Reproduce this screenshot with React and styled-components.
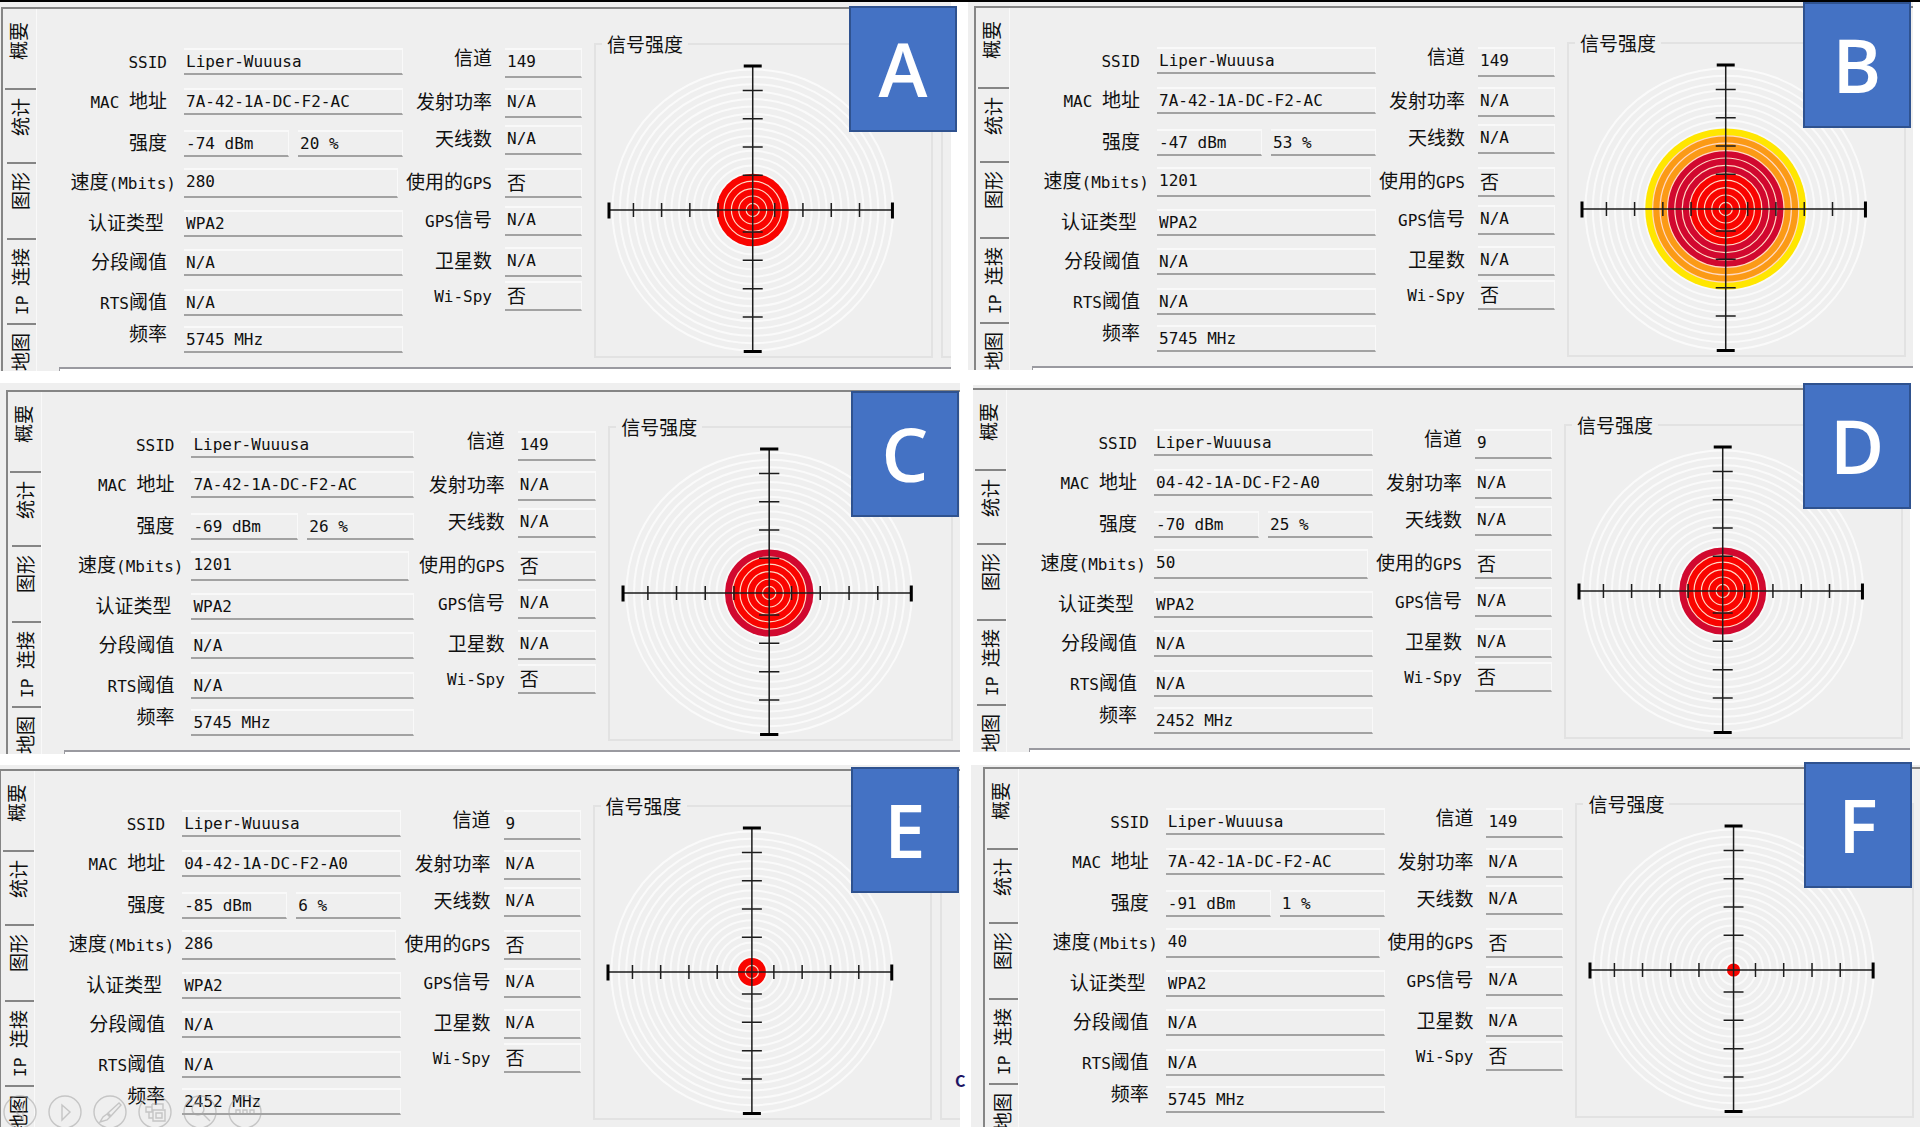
import React from 'react';
import styled, { createGlobalStyle } from 'styled-components';

const colors = {
  face: '#efefef',
  ink: '#101010',
  edge: '#858585',
  line: '#a2a2a2',
  soft: '#e2e2e2',
  light: '#f9f9f9',
  badge: '#4472c4',
  badgeEdge: '#2f528f',
};

const cjk = "'Noto Sans CJK SC', sans-serif";
const mono = "'DejaVu Sans Mono', 'Noto Sans CJK SC', monospace";

const GlobalStyle = createGlobalStyle`
  * {
    box-sizing: border-box;
  }
  body {
    margin: 0;
    background: #fff;
    color: ${colors.ink};
    font-family: ${cjk};
    font-size: 19px;
  }
`;

const Page = styled.main`
  position: relative;
  display: grid;
  grid-template-columns: 1fr 1fr;
  height: 100vh;
  border-top: 2px solid #000;
  overflow: hidden;
`;

const Column = styled.div`
  min-width: 0;
`;

const Panel = styled.section`
  position: relative;
  margin: ${(p) => p.$margin};
  padding: ${(p) => p.$pad};
  background: ${colors.face};
`;

const Frame = styled.div`
  display: grid;
  grid-template-columns:
    34px minmax(0, 366fr) minmax(0, 179fr) minmax(0, 12fr) minmax(0, 339fr)
    ${(p) => p.$tail}px;
  grid-template-rows: 358px 4px;
  border-top: 2px solid ${colors.edge};
  border-left: ${(p) => p.$edge}px solid ${colors.edge};
`;

const Tabs = styled.div`
  grid-row: 1 / 3;
  display: grid;
  grid-template-rows: 81px 74px 76px 85px 90px;
  border-right: 1px solid ${colors.light};
  overflow: hidden;
`;

const Tab = styled.button`
  display: flex;
  justify-content: flex-start;
  align-items: flex-start;
  margin: 0 2px 0 ${(p) => (p.$active ? 2 : 4)}px;
  padding: ${(p) => (p.$active ? 13 : 8)}px 0 0;
  border: 0;
  border-bottom: 2px solid ${colors.edge};
  background: none;
  color: inherit;
  font: inherit;
  span {
    writing-mode: vertical-rl;
    text-orientation: sideways;
    transform: rotate(180deg);
    line-height: 26px;
    white-space: nowrap;
  }
`;

const Ascii = styled.span`
  font-family: ${mono};
  font-size: 16px;
`;

const Form = styled.div`
  display: grid;
  align-items: end;
`;

const MainForm = styled(Form)`
  grid-template-columns: minmax(0, 147fr) minmax(0, 219fr);
  grid-template-rows: 40px 40px 42px 41px 39px 39px 40px 37px;
  align-content: start;
  padding-top: 26px;
`;

const SideForm = styled(Form)`
  grid-template-columns: minmax(0, 102fr) minmax(0, 77fr);
  grid-template-rows: 38px 40px 37px 43px 38px 41px 34px;
  align-content: start;
  padding-top: 31px;
`;

const Label = styled.label`
  align-self: ${(p) => (p.$middle ? 'center' : 'end')};
  justify-self: end;
  padding-right: ${(p) => p.$gap}px;
  line-height: ${(p) => p.$height - 4}px;
  height: ${(p) => p.$height}px;
  white-space: nowrap;
`;

const Field = styled.input`
  display: block;
  width: 100%;
  min-width: 0;
  height: ${(p) => p.$height}px;
  padding: 0 2px ${(p) => (p.$height > 27 ? 3 : 0)}px;
  border: 0;
  border-top: 2px solid ${colors.light};
  border-right: 1px solid ${colors.light};
  border-bottom: 2px solid ${colors.line};
  border-radius: 0;
  background: transparent;
  color: inherit;
  font-family: ${mono};
  font-size: ${(p) => (p.$wide ? 19 : 16)}px;
  outline: none;
`;

const Cell = styled.div`
  display: flex;
  gap: 9px;
  padding-right: ${(p) => (p.$short ? 5 : 0)}px;
`;

const Group = styled.fieldset`
  min-width: 0;
  height: 324px;
  margin: 25px 0 0;
  padding: 0;
  border: 2px solid ${colors.soft};
  legend {
    margin-left: 6px;
    padding: 0 5px;
    line-height: 20px;
  }
`;

const Dial = styled.svg`
  display: block;
  width: 87%;
  height: 292px;
  margin: 10px 0 0 11px;
`;

const Stub = styled.div`
  min-width: 0;
  height: 314px;
  margin: 35px 0 0 8px;
  border: 2px solid ${colors.soft};
  border-right: 0;
`;

const Mark = styled.div`
  padding: 264px 0 0 13px;
  color: #1c1464;
  font-size: 16px;
  font-weight: 700;
  line-height: 16px;
`;

const List = styled.div`
  grid-column: 2 / -1;
  grid-row: 2;
  margin-left: 22px;
  border-top: 2px solid #9a9aa0;
  border-left: 1px solid #9a9aa0;
  background: #fff;
`;

const Badge = styled.div`
  position: absolute;
  top: ${(p) => p.$top}px;
  right: ${(p) => p.$right}px;
  display: flex;
  align-items: center;
  justify-content: center;
  width: 108px;
  height: 126px;
  border: 2px solid ${colors.badgeEdge};
  background: ${colors.badge};
  color: #fff;
  font-family: 'Open Sans', sans-serif;
  font-weight: 600;
  font-size: 74px;
  line-height: 1;
`;

const Controls = styled.nav`
  position: absolute;
  left: 3px;
  bottom: -2px;
  display: flex;
  gap: 11px;
`;

const Control = styled.button`
  width: 34px;
  height: 34px;
  padding: 0;
  border: 0;
  background: none;
  opacity: 0.55;
  svg {
    display: block;
    fill: none;
    stroke: #a4a4a4;
    stroke-width: 1.4;
  }
`;

const STEP = 7.4;
const RINGS = 19;
const TICKS = [-119.5, -91.3, -63, -34.7, 22, 50.3, 78.7, 107];

const ringColor = (n) => {
  if (n <= 5) return '#f90400';
  if (n <= 8) return '#d1082f';
  if (n <= 10) return '#fb9a16';
  return '#ffe600';
};

function Radar({ level }) {
  const rings = Array.from({ length: RINGS }, (_, i) => i + 1);
  const discs = rings.filter((n) => n <= level).reverse();
  return (
    <Dial viewBox="-146 -146 292 292" preserveAspectRatio="none">
      {rings.map((n) => (
        <circle key={n} r={n * STEP} fill="none" stroke="#fafafa" strokeWidth="2" />
      ))}
      {discs.map((n) => (
        <circle
          key={n}
          r={n * STEP - 0.8}
          fill={ringColor(n)}
          stroke={n === level ? 'none' : '#ffd9c4'}
          strokeWidth="1.2"
        />
      ))}
      <g stroke="#1c1c1c" strokeWidth="1.5" fill="none">
        <path d="M-144 0H140M0 -144V141" />
        {TICKS.map((t) => (
          <path key={t} d={`M${t} -7V7M-10 ${t}H10`} />
        ))}
      </g>
      <path
        d="M-144 -7.5V8.5M140 -7.5V8.5M-9 -144H9M-9 141.5H9"
        stroke="#000"
        strokeWidth="3"
      />
    </Dial>
  );
}

// Latin runs are set in the narrow fixed-width face, the rest in the CJK one
function Mixed({ text }) {
  return text
    .split(/([ -~]+)/)
    .filter(Boolean)
    .map((part) => (/^[ -~]/.test(part) ? <Ascii key={part}>{part}</Ascii> : part));
}

const TABS = ['概要', '统计', '图形', 'IP 连接', '地图'];

const PANELS = [
  {
    id: 'A', ssid: 'Liper-Wuuusa', mac: '7A-42-1A-DC-F2-AC', dbm: '-74 dBm', pct: '20 %', speed: '280', freq: '5745 MHz', channel: '149',
    level: 5, margin: '0 9px 0 0', pad: '5px 0 0 1px', edge: 2, tail: 18, badge: [4, -6],
  },
  {
    id: 'C', ssid: 'Liper-Wuuusa', mac: '7A-42-1A-DC-F2-AC', dbm: '-69 dBm', pct: '26 %', speed: '1201', freq: '5745 MHz', channel: '149',
    level: 6, margin: '12px 0 0', pad: '7px 0 0 6px', edge: 2, tail: 7, badge: [8, 1],
  },
  {
    id: 'E', ssid: 'Liper-Wuuusa', mac: '04-42-1A-DC-F2-A0', dbm: '-85 dBm', pct: '6 %', speed: '286', freq: '2452 MHz', channel: '9',
    level: 2, margin: '11px 0 0', pad: '4px 0 0', edge: 1, tail: 28, badge: [2, 1], mark: 'C',
  },
  {
    id: 'B', ssid: 'Liper-Wuuusa', mac: '7A-42-1A-DC-F2-AC', dbm: '-47 dBm', pct: '53 %', speed: '1201', freq: '5745 MHz', channel: '149',
    level: 11, margin: '0 7px 0 8px', pad: '4px 0 0 6px', edge: 2, tail: 7, badge: [0, 2],
  },
  {
    id: 'D', ssid: 'Liper-Wuuusa', mac: '04-42-1A-DC-F2-A0', dbm: '-70 dBm', pct: '25 %', speed: '50', freq: '2452 MHz', channel: '9',
    level: 6, margin: '15px 10px 0 13px', pad: '3px 0 0', edge: 0, tail: 7, badge: [-2, -1],
  },
  {
    id: 'F', ssid: 'Liper-Wuuusa', mac: '7A-42-1A-DC-F2-AC', dbm: '-91 dBm', pct: '1 %', speed: '40', freq: '5745 MHz', channel: '149',
    level: 1, margin: '13px 0 0 11px', pad: '2px 0 0 12px', edge: 2, tail: 6, badge: [-3, 8],
  },
];

function Row({ id, label, values, gap, height, middle, short }) {
  return (
    <>
      <Label htmlFor={id} $gap={gap} $height={height} $middle={middle}>
        <Mixed text={label} />
      </Label>
      <Cell $short={short}>
        {values.map((v, i) => (
          <Field
            key={i}
            id={i === 0 ? id : `${id}-${i}`}
            aria-label={i === 0 ? undefined : label}
            $height={height}
            $wide={v === '否'}
            value={v}
            readOnly
          />
        ))}
      </Cell>
    </>
  );
}

function Station({ data }) {
  const left = [
    { label: 'SSID', values: [data.ssid] },
    { label: 'MAC 地址', values: [data.mac] },
    { label: '强度', values: [data.dbm, data.pct] },
    { label: '速度(Mbits)', values: [data.speed], gap: 8, height: 30, short: true },
    { label: '认证类型', values: ['WPA2'], gap: 20 },
    { label: '分段阈值', values: ['N/A'] },
    { label: 'RTS阈值', values: ['N/A'] },
    { label: '频率', values: [data.freq], middle: true },
  ];
  const right = [
    { label: '信道', values: [data.channel], middle: true },
    { label: '发射功率', values: ['N/A'] },
    { label: '天线数', values: ['N/A'] },
    { label: '使用的GPS', values: ['否'] },
    { label: 'GPS信号', values: ['N/A'] },
    { label: '卫星数', values: ['N/A'] },
    { label: 'Wi-Spy', values: ['否'] },
  ];
  return (
    <Panel $margin={data.margin} $pad={data.pad}>
      <Frame $edge={data.edge} $tail={data.tail}>
        <Tabs role="tablist">
          {TABS.map((t, i) => (
            <Tab key={t} role="tab" aria-selected={i === 0} $active={i === 0}>
              <span>
                <Mixed text={t} />
              </span>
            </Tab>
          ))}
        </Tabs>
        <MainForm>
          {left.map((r, i) => (
            <Row key={r.label} id={`${data.id}-l${i}`} gap={17} height={27} {...r} />
          ))}
        </MainForm>
        <SideForm>
          {right.map((r, i) => (
            <Row key={r.label} id={`${data.id}-r${i}`} gap={13} height={30} {...r} />
          ))}
        </SideForm>
        <div />
        <Group>
          <legend>信号强度</legend>
          <Radar level={data.level} />
        </Group>
        {data.tail > 10 && <Stub>{data.mark && <Mark>{data.mark}</Mark>}</Stub>}
        <List />
      </Frame>
      <Badge $top={data.badge[0]} $right={data.badge[1]}>
        {data.id}
      </Badge>
    </Panel>
  );
}

const CONTROLS = [
  { name: 'Previous', d: 'M20 11L13 17L20 24Z' },
  { name: 'Next', d: 'M14 10L22 17L14 25Z' },
  { name: 'Pen', d: 'M26 8L15 18L18 21L28 10ZM14 19L10 22L7 27L14 25L17 22Z' },
  { name: 'Slides', d: 'M8 12H14V17H8ZM14 9H25V14M14 9V12M15 15H27V26H15ZM18 18H24V23H18ZM11 17V23H15' },
  { name: 'Zoom', d: 'M21 14A6 6 0 1 1 9 14A6 6 0 1 1 21 14M19 18L27 26' },
  { name: 'More', d: 'M8 15H12V19H8ZM15 15H19V19H15ZM22 15H26V19H22Z' },
];

export default function App() {
  return (
    <>
      <GlobalStyle />
      <Page>
        <Column>
          {PANELS.slice(0, 3).map((p) => (
            <Station key={p.id} data={p} />
          ))}
        </Column>
        <Column>
          {PANELS.slice(3).map((p) => (
            <Station key={p.id} data={p} />
          ))}
        </Column>
        <Controls>
          {CONTROLS.map((c) => (
            <Control key={c.name} aria-label={c.name}>
              <svg width="34" height="34" viewBox="0 0 34 34">
                <circle cx="17" cy="17" r="16" />
                <path d={c.d} />
              </svg>
            </Control>
          ))}
        </Controls>
      </Page>
    </>
  );
}
